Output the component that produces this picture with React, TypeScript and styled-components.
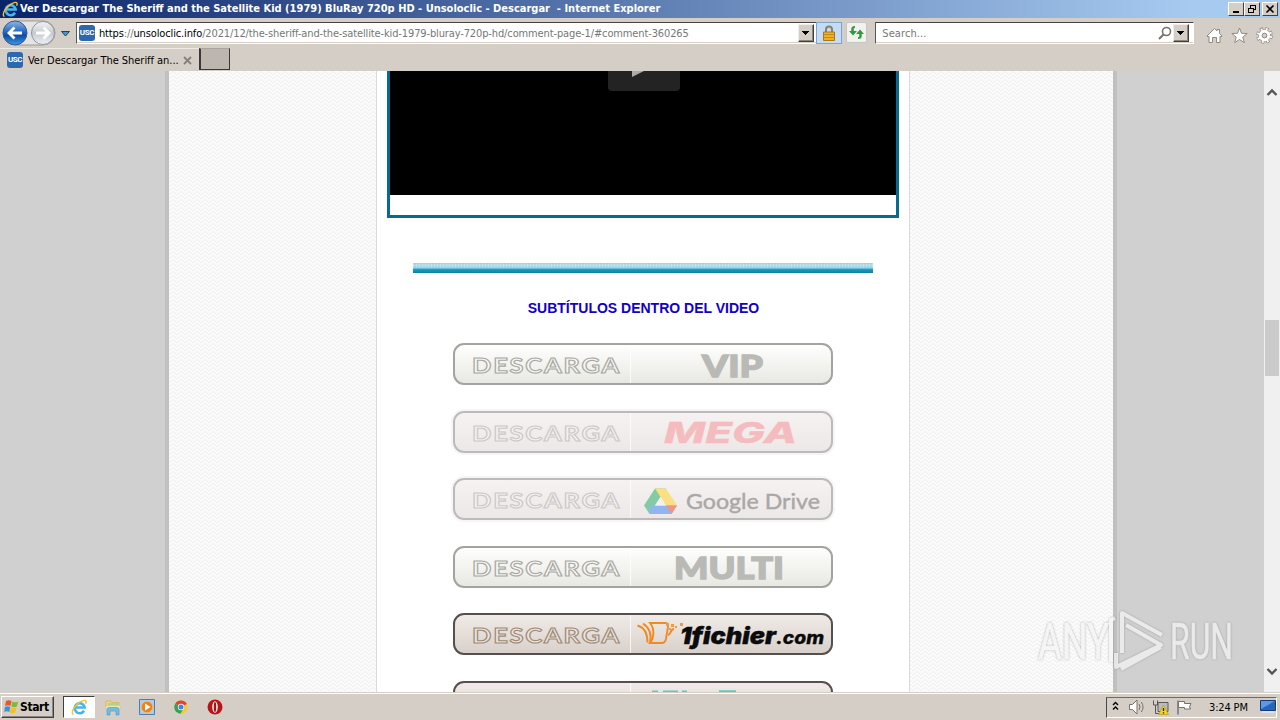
import React from "react"
import styled, { createGlobalStyle, css } from "styled-components"

const GlobalStyle = createGlobalStyle`
  * {
    box-sizing: border-box;
  }
  body {
    margin: 0;
    overflow: hidden;
    background: #d4d0c8;
  }
  svg {
    display: block;
    flex: none;
  }
`

const ui = css`
  font-family: "DejaVu Sans Condensed", "DejaVu Sans", sans-serif;
  font-stretch: condensed;
  font-size: 11px;
  white-space: pre;
`

const Desktop = styled.div`
  width: 1280px;
  height: 720px;
  display: flex;
  flex-direction: column;
  position: relative;
  overflow: hidden;
  background: #d5cec7;
`

/* ---------- window chrome ---------- */

const TitleBar = styled.header`
  height: 18px;
  display: flex;
  align-items: center;
  padding: 0 2px 0 2px;
  background: linear-gradient(to right, #0a246a, #a6caf0 93%);
`

const Title = styled.h1`
  ${ui}
  margin: 0 auto 0 0;
  padding-left: 1px;
  font-weight: bold;
  line-height: 18px;
  color: #fff;
  letter-spacing: 0;
`

const CaptionButton = styled.button<{ $gap?: number }>`
  width: 16px;
  height: 14px;
  padding: 0;
  margin-left: ${(p) => p.$gap || 0}px;
  display: flex;
  align-items: center;
  justify-content: center;
  border: 1px solid;
  border-color: #fff #404040 #404040 #fff;
  background: #d5cec7;
`

const AddressRow = styled.div`
  height: 30px;
  display: flex;
  align-items: flex-start;
  padding: 4px 7px 0 2px;
`

const NavButtons = styled.div`
  display: flex;
  width: 74px;
  height: 26px;
  margin-top: -2px;
`

const Field = styled.div<{ $width: number; $end: number }>`
  width: ${(p) => p.$width}px;
  height: 22px;
  display: flex;
  align-items: center;
  padding: 0 ${(p) => p.$end}px 0 2px;
  background: #fff;
  border: 1px solid;
  border-color: #4a4040 #fff #fff #5f5856;
  box-shadow: inset 0 -1px #d5cec7;
`

const Favicon = styled.span`
  width: 16px;
  height: 16px;
  border-radius: 3px;
  background: #2b68ad;
  color: #fff;
  font: bold 8px/16px Roboto, "Liberation Sans", sans-serif;
  letter-spacing: -0.4px;
  text-align: center;
  flex: none;
`

const FieldText = styled.span<{ $spacing?: number }>`
  ${ui}
  line-height: 20px;
  padding: 2px 0 0 4px;
  margin-right: auto;
  color: #777;
  letter-spacing: ${(p) => p.$spacing || 0}px;

  b {
    font-weight: normal;
    color: #000;
  }
`

const DropButton = styled.button`
  width: 16px;
  height: 18px;
  padding: 0;
  display: flex;
  align-items: center;
  justify-content: center;
  background: #d5cec7;
  border: 1px solid;
  border-color: #eee #404040 #404040 #eee;
  box-shadow: inset -1px -1px #8a8580;
`

const LockBox = styled.div`
  width: 26px;
  height: 22px;
  margin-left: -1px;
  margin-right: -1px;
  display: flex;
  align-items: center;
  justify-content: center;
  background: #c4dcf6;
  border: 1px solid #7ba4d6;
`

const RefreshBox = styled.div`
  width: 21px;
  height: 21px;
  margin: 0 8px 0 5px;
  display: flex;
  align-items: center;
  justify-content: center;
  background: #f1f1ee;
  border: 1px solid #c4c6c8;
  border-radius: 2px;
`

const Tools = styled.div`
  display: flex;
  gap: 8px;
  margin: 5px 0 0 12px;
`

const TabRow = styled.div`
  height: 23px;
  display: flex;
`

const Tab = styled.div`
  width: 199px;
  height: 23px;
  padding-left: 7px;
  display: flex;
  align-items: center;
  border-top: 1px solid #eeeae6;
`

const TabText = styled.span`
  ${ui}
  width: 149px;
  margin-left: 5px;
  margin-right: 6px;
  letter-spacing: -0.04px;
`

const NewTab = styled.div`
  width: 31px;
  height: 22px;
  background: #bdb5b0;
  border: 1px solid #3c3634;
  border-left-width: 2px;
  border-top-color: #aaa39e;
`

/* ---------- page ---------- */

const Viewport = styled.main`
  height: 621px;
  display: flex;
  overflow: hidden;
  background: #d0d0d0;
`

const zigzag =
  "data:image/svg+xml,%3Csvg xmlns='http://www.w3.org/2000/svg' width='8' height='4'%3E%3Cpath d='M-1 4.500 4 .5 9 4.500M-1 .5 0 0M8 0l1 .5' fill='none' stroke='%23ededed'/%3E%3C/svg%3E"

const Wrapper = styled.div`
  width: 952px;
  margin-left: 165px;
  display: flex;
  justify-content: space-between;
  border: solid #c0c0c0;
  border-width: 0 4px;
  background: #fbfbfb url("${zigzag}");
`

const Article = styled.article`
  width: 534px;
  margin-left: 207px;
  margin-right: auto;
  display: flex;
  flex-direction: column;
  align-items: center;
  background: #fff;
  border: solid #dadada;
  border-width: 0 1px;
`

const VideoFrame = styled.div`
  width: 512px;
  height: 147px;
  flex: none;
  border: 3px solid #066a91;
  border-top: 0;
`

const Video = styled.div`
  height: 124px;
  display: flex;
  justify-content: center;
  background: #000;
`

const PlayButton = styled.div`
  width: 72px;
  height: 20px;
  display: flex;
  justify-content: center;
  padding-right: 12px;
  margin-left: 1px;
  border-radius: 0 0 4px 4px;
  background: #232323;
`

const Divider = styled.div`
  width: 460px;
  height: 10px;
  flex: none;
  margin-top: 45px;
  background:
    repeating-linear-gradient(to right, rgba(255, 255, 255, 0.2) 0 1px, transparent 1px 3px) 0 0 / 100% 5px no-repeat,
    linear-gradient(#a5c5d2 0, #b7e0ee 20%, #8dd0e4 50%, #1c9dbb 65%, #10809f 100%);
`

const Heading = styled.h2`
  margin: 26px 0 0 1px;
  font: bold 14px/18px "Liberation Sans", Arial, sans-serif;
  color: #1200c8;
`

const ButtonList = styled.div`
  display: flex;
  flex-direction: column;
  gap: 25.5px;
  margin-top: 26px;
`

type Tone = "plain" | "faded" | "strong"

const tones = {
  plain: { border: "#a3a39f", bg: "linear-gradient(#fefefd, #e8e8e3)", line: "#a9a9a3", fill: "#f8f8f5" },
  faded: { border: "#bcbaba", bg: "linear-gradient(#f5f2f1, #ebe8e7)", line: "#cdc9c7", fill: "#f3f0ef" },
  strong: { border: "#55504e", bg: "linear-gradient(#f0ebe8, #d9d0ca)", line: "#a08b77", fill: "#ede5df" },
}

const DownloadLink = styled.a<{ $tone: Tone }>`
  width: 380px;
  height: 42px;
  flex: none;
  display: flex;
  border: 2px solid ${(p) => tones[p.$tone].border};
  border-radius: 11px;
  background: ${(p) => tones[p.$tone].bg};
  box-shadow: ${(p) => (p.$tone === "faded" ? "0 0 0 2px #f7f5f5" : "none")};
`

const Half = styled.span<{ $first?: boolean }>`
  width: ${(p) => (p.$first ? 176 : 200)}px;
  border-right: ${(p) => (p.$first ? "1px solid rgba(255, 255, 255, 0.75)" : "0")};
`

const Label = ({ tone }: { tone: Tone }) => (
  <svg width="175" height="38" viewBox="455 345 175 38">
    <text
      x="472"
      y="372.5"
      textLength="149"
      lengthAdjust="spacingAndGlyphs"
      fontFamily="Lato, sans-serif"
      fontWeight="700"
      fontSize="21.5"
      letterSpacing="1.5"
      stroke={tones[tone].line}
      strokeWidth="1.1"
      fill={tones[tone].fill}
    >
      DESCARGA
    </text>
  </svg>
)

type WordProps = {
  x: number
  y: number
  width: number
  size: number
  fill: string
  font?: string
  weight?: number
  italic?: boolean
  heavy?: number
  children: string
}

const Word = ({ x, y, width, size, fill, font = "Lato", weight = 900, italic, heavy = 0, children }: WordProps) => (
  <text
    x={x}
    y={y}
    textLength={width}
    lengthAdjust="spacingAndGlyphs"
    fontFamily={`${font}, sans-serif`}
    fontWeight={weight}
    fontStyle={italic ? "italic" : "normal"}
    fontSize={size}
    fill={fill}
    stroke={fill}
    strokeWidth={heavy}
  >
    {children}
  </text>
)

// Brand art is drawn in a 199x38 box whose left edge is the button's middle line
const Brand = ({ children }: { children: React.ReactNode }) => (
  <svg width="199" height="38" viewBox="0 0 199 38">
    {children}
  </svg>
)

const downloads: { id: string; tone: Tone; art: React.ReactNode }[] = [
  {
    id: "vip",
    tone: "plain",
    art: <Word x={71} y={31.5} width={61} size={31} heavy={1.4} fill="#b9b9b6">VIP</Word>,
  },
  {
    id: "mega",
    tone: "faded",
    art: <Word x={33} y={30} width={133} size={29} heavy={0.3} fill="#f5bcbf" font="Inter" weight={800} italic>MEGA</Word>,
  },
  {
    id: "drive",
    tone: "faded",
    art: (
      <>
        <path d="M24 8.500h11L18.500 34 13 25.500z" fill="#83cba2" />
        <path d="M24 8.500h11L46 25.500H35z" fill="#fbdf80" />
        <path d="M18.500 25.500H46L40.500 34h-22z" fill="#90b5ef" />
        <path d="M35 25.500h11L40.500 34z" fill="#ee9489" />
        <path d="M29.500 17 35 25.500H24z" fill="#f3f0ef" />
        <Word x={55} y={28.500} width={134} size={22} heavy={0.4} fill="#aaa7a6" weight={400}>Google Drive</Word>
      </>
    ),
  },
  {
    id: "multi",
    tone: "plain",
    art: <Word x={43} y={31} width={110} size={31} heavy={1.4} fill="#b9b9b6">MULTI</Word>,
  },
  {
    id: "1fichier",
    tone: "strong",
    art: (
      <>
        <g fill="none" stroke="#ef8a25" strokeWidth="1.900">
          <path d="M19 8h15q4 0 3 4l-2 12q-1 4-4 4H19c4-5 5-14 0-20z" />
          <path d="M12 8.500c6 4 9 11 7 20M6.500 10.500c7 2 10 9 10 17" />
          <path d="M37 20c3 0 2-6 6-6" />
        </g>
        <path d="M35 8h3v3h-3zM40 9h3v3h-3zM38 13h2v2h-2zM49 8h3v3h-3zM44 11h2v2h-2z" fill="#f09a45" />
        <Word x={49} y={28.500} width={96} size={22.500} heavy={0.4} fill="#0b0b0b" font="Inter" italic>1fichier</Word>
        <Word x={145} y={28.500} width={48} size={17} heavy={0.3} fill="#0b0b0b" font="Inter" weight={800} italic>.com</Word>
      </>
    ),
  },
  {
    id: "more",
    tone: "strong",
    art: <path d="M21 7.500h6v3h-6zM32 7.500h15v3H32zM51 7.500h5v3h-5zM88 7.200h17v4H88z" fill="#5ccac0" />,
  },
]

const ScrollBar = styled.aside`
  width: 16px;
  margin-left: auto;
  display: flex;
  flex-direction: column;
  align-items: center;
  justify-content: space-between;
  padding: 17px 0 16px;
  background: #f0f0f0;
`

const Thumb = styled.div`
  width: 14px;
  height: 56px;
  margin-bottom: 68px;
  background: #cbcbcb;
`

const Chevron = ({ down }: { down?: boolean }) => (
  <svg width="12" height="9" viewBox="0 0 12 9">
    <path
      d={down ? "M1.500 2 6 6.500 10.500 2" : "M1.500 7 6 2.500 10.500 7"}
      fill="none"
      stroke="#555"
      strokeWidth="2.400"
    />
  </svg>
)

/* ---------- taskbar ---------- */

const Taskbar = styled.footer`
  height: 28px;
  display: flex;
  align-items: center;
  padding: 1px 3px 0 1px;
  border-top: 1px solid #d5cec7;
  box-shadow: inset 0 1px #fff;
`

const StartButton = styled.button`
  ${ui}
  width: 53px;
  height: 22px;
  padding: 0 0 1px 2px;
  display: flex;
  align-items: center;
  gap: 1px;
  font-weight: bold;
  font-size: 12px;
  letter-spacing: -0.4px;
  color: #000;
  background: #d5cec7;
  border: 1px solid;
  border-color: #fff #404040 #404040 #fff;
  box-shadow: inset -1px -1px #8a8580;
`

const TaskButton = styled.div<{ $active?: boolean }>`
  width: ${(p) => (p.$active ? 32 : 34)}px;
  height: 22px;
  display: flex;
  align-items: center;
  justify-content: center;
  ${(p) =>
    p.$active &&
    css`
      margin: 0 1px 0 9px;
      background: #fff;
      border: 1px solid;
      border-color: #404040 #fff #fff #404040;
    `}
`

const Tray = styled.div`
  width: 171px;
  height: 21px;
  margin-left: auto;
  display: flex;
  align-items: center;
  padding: 0 0 0 5px;
  border: 1px solid;
  border-color: #6f6a66 #fff #fff #4a4644;
`

const Clock = styled.time`
  ${ui}
  width: 51px;
  margin-left: 17px;
  letter-spacing: -0.15px;
`

const Watermark = styled.svg`
  position: absolute;
  left: 1030px;
  top: 604px;
  overflow: visible;
  filter: drop-shadow(0 0 1px rgba(110, 110, 110, 0.7));
`

/* ---------- icons ---------- */

const IeIcon = ({ size = 17 }: { size?: number }) => (
  <svg width={size} height={size} viewBox="0 0 18 18">
    <path d="M13.800 12.500A5.300 5.300 0 1 1 14.500 9H5" fill="none" stroke="#48b4ec" strokeWidth="2.800" />
    <path d="M2.500 16.500C-1 14 5 5 11 2.500c4-2 6-1 4.500 2.500" fill="none" stroke="#f2c12e" strokeWidth="1.500" />
  </svg>
)

const NavIcons = () => (
  <svg width="72" height="26" viewBox="2 20 72 26">
    <defs>
      <linearGradient id="back" x1="0" y1="0" x2="0" y2="1">
        <stop offset="0" stopColor="#8fb8e6" />
        <stop offset="0.45" stopColor="#2468c0" />
        <stop offset="0.6" stopColor="#0f4ba4" />
        <stop offset="1" stopColor="#3b9be8" />
      </linearGradient>
      <linearGradient id="fwd" x1="0" y1="0" x2="0" y2="1">
        <stop offset="0" stopColor="#f4f4f5" />
        <stop offset="0.5" stopColor="#c6cad0" />
        <stop offset="1" stopColor="#eef2f6" />
      </linearGradient>
    </defs>
    <path d="M14 21h30a12 12 0 0 1 11 12 12 12 0 0 1-12 12H15z" fill="#e6e4e3" stroke="#8d8b8c" strokeWidth=".8" />
    <circle cx="15" cy="33" r="12" fill="url(#back)" stroke="#39588e" />
    <circle cx="43" cy="33" r="11.500" fill="url(#fwd)" stroke="#8f969f" />
    <path d="M22 33H9M14.500 27.500 9 33l5.500 5.500" fill="none" stroke="#fff" strokeWidth="2.800" />
    <path d="M36 33h13M43.500 27.500 49 33l-5.500 5.500" fill="none" stroke="#fff" strokeWidth="2.800" />
    <path d="M61.500 31.500h8L65.500 36z" fill="#3d9cc4" stroke="#23405c" />
  </svg>
)

const DownArrow = () => (
  <svg width="8" height="4" viewBox="0 0 8 4" shapeRendering="crispEdges">
    <path d="M0 0h7L3.500 4z" fill="#000" />
  </svg>
)

const LockIcon = () => (
  <svg width="14" height="16" viewBox="0 0 14 16">
    <path d="M4 7V4.500a3 3 0 0 1 6 0V7" fill="none" stroke="#8b8261" strokeWidth="2" />
    <path d="M1.500 7h11v8.500h-11z" fill="#eeb221" stroke="#a8791a" />
    <path d="M2 9.500h10M2 12.500h10" stroke="#c58a15" />
  </svg>
)

const RefreshIcon = () => (
  <svg width="15" height="13" viewBox="0 0 15 13" fill="#319b3c">
    <path d="M6 0v2H4.800v3H8L4 9.500 0 5h2.300V2.500Q2.500 0 6 0z" />
    <path d="M9 13v-2h1.200V8H7l4-4.500L15 8h-2.300v2.500Q12.500 13 9 13z" />
  </svg>
)

const ToolIcons = () => (
  <Tools>
    <svg width="17" height="17" viewBox="0 0 17 17">
      <path d="M1 9 8.500 1.500 11 4V2.500h2.500V6.500L16 9l-1 1-1-.700V15.500H10.500V10.500h-4v5H3V9.300L2 10z" fill="#fff" stroke="#8e8985" />
    </svg>
    <svg width="17" height="17" viewBox="0 0 17 17">
      <path d="m8.500 1 2 5.300 5.700.200-4.400 3.600 1.500 5.500-4.800-3.100-4.800 3.100 1.500-5.500L.800 6.500l5.700-.200z" fill="#fff" stroke="#8e8985" />
    </svg>
    <svg width="17" height="17" viewBox="0 0 17 17">
      <circle cx="8.500" cy="8.500" r="6.300" fill="none" stroke="#8e8985" strokeWidth="4" strokeDasharray="2.900 2.048" />
      <circle cx="8.500" cy="8.500" r="5.200" fill="none" stroke="#8e8985" strokeWidth="2" />
      <circle cx="8.500" cy="8.500" r="6.300" fill="none" stroke="#fff" strokeWidth="2.800" strokeDasharray="1.700 3.248" strokeDashoffset="-0.600" />
      <circle cx="8.500" cy="8.500" r="4.200" fill="none" stroke="#fff" strokeWidth="3" />
      <circle cx="8.500" cy="8.500" r="2.300" fill="#d5cec7" stroke="#8e8985" />
    </svg>
  </Tools>
)

const WindowsFlag = () => (
  <svg width="15" height="15" viewBox="0 0 15 15">
    <path d="M2 2q3-1.700 5.500 0L6.500 7Q4 5.500 1 7z" fill="#e8562a" />
    <path d="M8.300 2.500q3 1.700 6 0l-1.500 5q-2.500 1.500-5.500 0z" fill="#7fb93a" />
    <path d="M.9 8q3-1.600 5.400 0l-1 5q-2.500-1.600-5 0z" fill="#3f8fd9" />
    <path d="M7 8.500q3 1.600 5.600 0l-1.400 5q-2.700 1.400-5.300 0z" fill="#f5c022" />
  </svg>
)

const FolderIcon = () => (
  <svg width="16" height="17" viewBox="0 0 16 17">
    <path d="M1 2h5l1 1.500h7V8H1z" fill="#f0d782" stroke="#cdb05c" strokeWidth=".7" />
    <path d="M3 4h11v6H3z" fill="#a8d59a" />
    <path d="M1 6.500h14V11H1z" fill="#f7e7a6" stroke="#d8bf70" strokeWidth=".5" />
    <path d="M2 16V10.500Q2 8.500 4 8.500h8q2 0 2 2V16h-3v-4H5v4z" fill="#74bce4" stroke="#4a94c0" strokeWidth=".6" />
  </svg>
)

const PlayerIcon = () => (
  <svg width="16" height="16" viewBox="0 0 16 16">
    <path d="M.5.5h15v15H.5z" fill="#a9cdec" stroke="#4c7fb0" />
    <circle cx="8" cy="8" r="5.800" fill="#f08318" stroke="#f8c080" strokeWidth=".7" />
    <path d="M6 4.500 11.500 8 6 11.500z" fill="#fff" />
  </svg>
)

const ChromeIcon = () => (
  <svg width="14" height="14" viewBox="0 0 14 14">
    <circle cx="7" cy="7" r="6.700" fill="#f6c935" />
    <path d="M7 7 1.200 3.650A6.700 6.700 0 0 1 12.900 4z" fill="#dc4437" />
    <path d="M7 7 1.200 3.650A6.700 6.700 0 0 0 6.500 13.700L9.500 8.500z" fill="#31a352" />
    <circle cx="7" cy="7" r="3.200" fill="#fff" />
    <circle cx="7" cy="7" r="2.500" fill="#4384e8" />
  </svg>
)

const OperaIcon = () => (
  <svg width="16" height="16" viewBox="0 0 16 16">
    <circle cx="8" cy="8" r="7.500" fill="#b91519" />
    <ellipse cx="8" cy="8" rx="2.800" ry="5.800" fill="#f4eeee" />
    <ellipse cx="8" cy="8" rx="1.200" ry="5" fill="#98181b" />
  </svg>
)

const TrayIcons = () => (
  <svg width="80" height="18" viewBox="0 0 80 18">
    <path d="M1 7 3.500 4.500 6 7M1 11.500 3.500 9 6 11.500" fill="none" stroke="#000" strokeWidth="1.400" />
    <path d="M17.500 6.500h3L25 2v14l-4.500-4.500h-3z" fill="#fff" stroke="#77716d" />
    <path d="M27 6q2 3 0 6M29.300 4q3.500 5 0 10" fill="none" stroke="#77716d" />
    <path d="M46 4.500h10v9H46z" fill="#b8bdc0" stroke="#5d5855" />
    <path d="M41.500 2.500V7h4V2.500M43.500 7v8.500H47" fill="none" stroke="#5a5552" />
    <path d="M51.500 7 56.500 16.500h-10z" fill="#f4d51c" stroke="#b99916" strokeWidth=".7" />
    <path d="M51.500 10v3M51.500 14.200v1.200" stroke="#222" strokeWidth="1.300" />
    <path d="M66 16.500v-14" stroke="#77716d" strokeWidth="1.500" />
    <path d="M66.500 3.500h6v2h6.500L77.500 9l1 2h-6V9.500h-6z" fill="#fff" stroke="#77716d" />
  </svg>
)

const DesktopIcon = () => (
  <svg width="16" height="14" viewBox="0 0 16 14">
    <path d="M.5.5h15v10H.5z" fill="#2565bd" stroke="#1a3b72" />
    <path d="M1 1h14L1 9z" fill="#5b9ae3" />
    <path d="M3 11h10l2 2H1z" fill="#d9e4f1" />
  </svg>
)

export default function App() {
  return (
    <Desktop>
      <GlobalStyle />
      <TitleBar>
        <IeIcon />
        <Title>Ver Descargar The Sheriff and the Satellite Kid (1979) BluRay 720p HD - Unsoloclic - Descargar  - Internet Explorer</Title>
        <CaptionButton aria-label="Minimize">
          <svg width="12" height="10" viewBox="0 0 12 10"><path d="M3 7h6v2H3z" /></svg>
        </CaptionButton>
        <CaptionButton aria-label="Restore">
          <svg width="10" height="10" viewBox="0 0 10 10" fill="none" stroke="#000" shapeRendering="crispEdges">
            <path d="M3.500 4V1.500h5v4H7M3 1h6M1.500 4.500h5v4h-5zM1 4h6" />
          </svg>
        </CaptionButton>
        <CaptionButton aria-label="Close" $gap={2}>
          <svg width="10" height="10" viewBox="0 0 10 10"><path d="m1.500 1.500 7 7M8.500 1.500l-7 7" stroke="#000" strokeWidth="1.600" /></svg>
        </CaptionButton>
      </TitleBar>
      <AddressRow>
        <NavButtons><NavIcons /></NavButtons>
        <Field $width={742} $end={2}>
          <Favicon>USC</Favicon>
          <FieldText $spacing={-0.128}>
            <b>https</b>://<b>unsoloclic.info</b>/2021/12/the-sheriff-and-the-satellite-kid-1979-bluray-720p-hd/comment-page-1/#comment-360265
          </FieldText>
          <DropButton><DownArrow /></DropButton>
        </Field>
        <LockBox><LockIcon /></LockBox>
        <RefreshBox><RefreshIcon /></RefreshBox>
        <Field $width={319} $end={4}>
          <FieldText $spacing={0.1}>Search...</FieldText>
          <svg width="15" height="15" viewBox="0 0 15 15" fill="none" stroke="#77716d">
            <circle cx="8.500" cy="5.500" r="4" strokeWidth="1.600" />
            <path d="M5.500 8.500 1 13" strokeWidth="2" />
          </svg>
          <DropButton><DownArrow /></DropButton>
        </Field>
        <ToolIcons />
      </AddressRow>
      <TabRow>
        <Tab>
          <Favicon>USC</Favicon>
          <TabText>Ver Descargar The Sheriff an...</TabText>
          <svg width="9" height="9" viewBox="0 0 9 9"><path d="m1 1 7 7M8 1 1 8" stroke="#85807c" strokeWidth="1.800" /></svg>
        </Tab>
        <NewTab />
      </TabRow>

      <Viewport>
        <Wrapper>
          <Article>
            <VideoFrame>
              <Video>
                <PlayButton>
                  <svg width="14" height="7" viewBox="0 0 14 7"><path d="M1 0h12L1 6z" fill="#aaa" /></svg>
                </PlayButton>
              </Video>
            </VideoFrame>
            <Divider />
            <Heading>SUBTÍTULOS DENTRO DEL VIDEO</Heading>
            <ButtonList>
              {downloads.map(({ id, tone, art }) => (
                <DownloadLink key={id} $tone={tone}>
                  <Half $first>{id !== "more" && <Label tone={tone} />}</Half>
                  <Half><Brand>{art}</Brand></Half>
                </DownloadLink>
              ))}
            </ButtonList>
          </Article>
        </Wrapper>
        <ScrollBar>
          <Chevron />
          <Thumb />
          <Chevron down />
        </ScrollBar>
      </Viewport>

      <Taskbar>
        <StartButton><WindowsFlag />Start</StartButton>
        <TaskButton $active><IeIcon /></TaskButton>
        <TaskButton><FolderIcon /></TaskButton>
        <TaskButton><PlayerIcon /></TaskButton>
        <TaskButton><ChromeIcon /></TaskButton>
        <TaskButton><OperaIcon /></TaskButton>
        <Tray>
          <TrayIcons />
          <Clock>3:24 PM</Clock>
          <DesktopIcon />
        </Tray>
      </Taskbar>

      <Watermark width="250" height="74" viewBox="1030 604 250 74" opacity=".7">
        <g fill="#f5f5f5" stroke="#f5f5f5" strokeWidth=".6" fontFamily="Roboto, sans-serif" fontSize="50">
          <text x="1038" y="659" textLength="71" lengthAdjust="spacingAndGlyphs">ANY</text>
          <text x="1170" y="659" textLength="63" lengthAdjust="spacingAndGlyphs">RUN</text>
        </g>
        <g fill="none" stroke="#f5f5f5" strokeWidth="4" strokeLinejoin="round">
          <path d="M1111 662v-42l4-2M1122 653v-40l40 22" />
          <path d="M1126 625l35 20-45 22V653M1121 669l40-22" />
        </g>
      </Watermark>
    </Desktop>
  )
}
